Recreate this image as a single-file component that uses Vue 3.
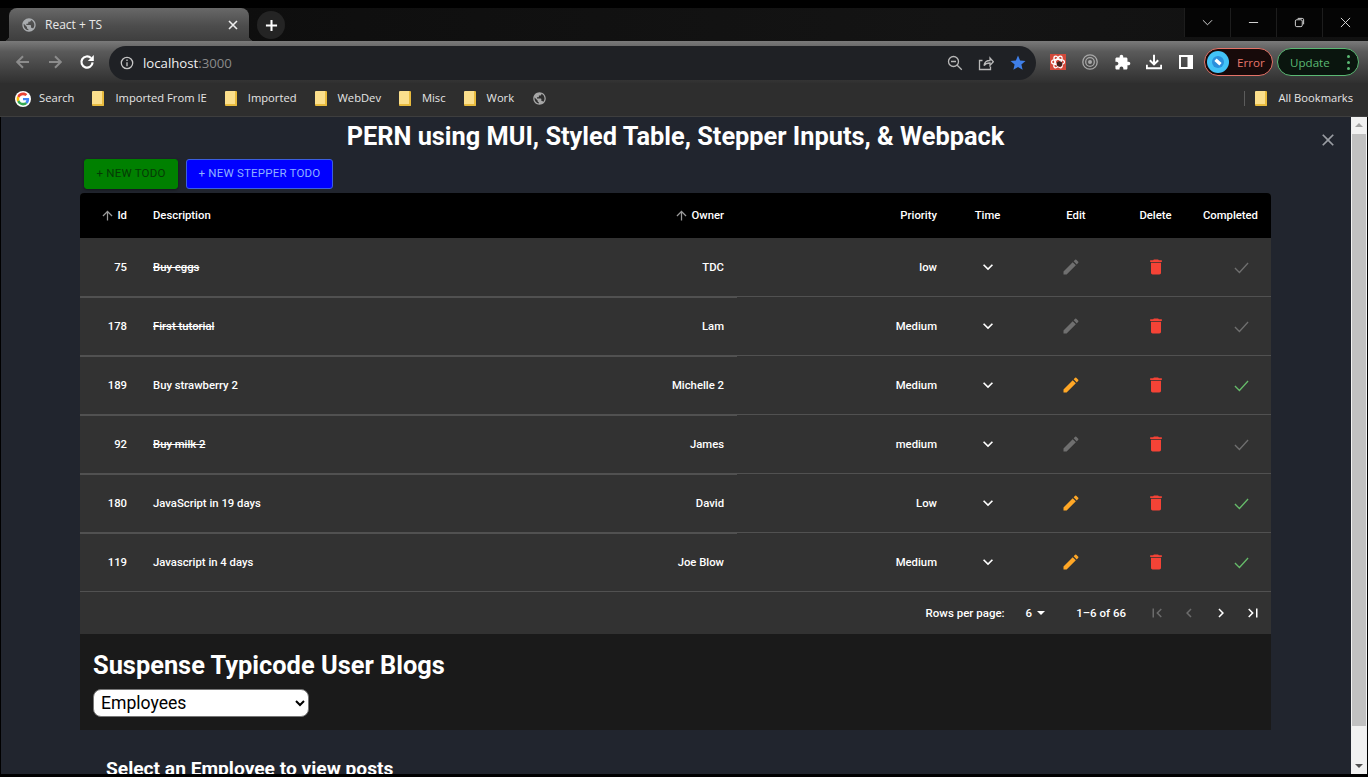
<script setup>
const icons = {
  up: 'M4 12l1.41 1.41L11 7.83V20h2V7.83l5.58 5.59L20 12l-8-8-8 8z',
  down: 'M7.41 8.59 12 13.17l4.59-4.58L18 10l-6 6-6-6 1.41-1.41z',
  edit: 'M3 17.25V21h3.75L17.81 9.94l-3.75-3.75L3 17.25zM20.71 7.04c.39-.39.39-1.02 0-1.41l-2.34-2.34a.9959.9959 0 0 0-1.41 0l-1.83 1.83 3.75 3.75 1.83-1.83z',
  trash: 'M6 19c0 1.1.9 2 2 2h8c1.1 0 2-.9 2-2V7H6v12zM19 4h-3.5l-1-1h-5l-1 1H5v2h14V4z',
  first: 'M18.41 16.59 13.82 12l4.59-4.59L17 6l-6 6 6 6zM6 6h2v12H6z',
  prev: 'M15.41 16.59 10.83 12l4.58-4.59L14 6l-6 6 6 6 1.41-1.41z',
  next: 'M8.59 16.59 13.17 12 8.59 7.41 10 6l6 6-6 6-1.41-1.41z',
  last: 'M5.59 7.41 10.18 12l-4.59 4.59L7 18l6-6-6-6zM16 6h2v12h-2z',
  close: 'M19 6.41 17.59 5 12 10.59 6.41 5 5 6.41 10.59 12 5 17.59 6.41 19 12 13.41 17.59 19 19 17.59 13.41 12z',
  puzzle: 'M20.5 11H19V7c0-1.1-.9-2-2-2h-4V3.5C13 2.12 11.88 1 10.5 1S8 2.12 8 3.5V5H4c-1.1 0-1.99.9-1.99 2v3.8H3.5c1.49 0 2.7 1.21 2.7 2.7s-1.21 2.7-2.7 2.7H2V20c0 1.1.9 2 2 2h3.8v-1.5c0-1.49 1.21-2.7 2.7-2.7 1.49 0 2.7 1.21 2.7 2.7V22H17c1.1 0 2-.9 2-2v-4h1.5c1.38 0 2.5-1.12 2.5-2.5S21.88 11 20.5 11z',
  star: 'M12 17.27 18.18 21l-1.64-7.03L22 9.24l-7.19-.61L12 2 9.19 8.63 2 9.24l5.46 4.73L5.82 21z',
  globe: 'M12 2C6.48 2 2 6.48 2 12s4.48 10 10 10 10-4.48 10-10S17.52 2 12 2zm-1 17.93c-3.95-.49-7-3.85-7-7.93 0-.62.08-1.21.21-1.79L9 15v1c0 1.1.9 2 2 2v1.93zm6.9-2.54c-.26-.81-1-1.39-1.9-1.39h-1v-3c0-.55-.45-1-1-1H8v-2h2c.55 0 1-.45 1-1V7h2c1.1 0 2-.9 2-2v-.41c2.93 1.19 5 4.06 5 7.41 0 2.08-.8 3.97-2.1 5.39z'
}

const bookmarks = ['Imported From IE', 'Imported', 'WebDev', 'Misc', 'Work']

const todos = [
  { id: 75, description: 'Buy eggs', owner: 'TDC', priority: 'low', done: true },
  { id: 178, description: 'First tutorial', owner: 'Lam', priority: 'Medium', done: true },
  { id: 189, description: 'Buy strawberry 2', owner: 'Michelle 2', priority: 'Medium', done: false },
  { id: 92, description: 'Buy milk 2', owner: 'James', priority: 'medium', done: true },
  { id: 180, description: 'JavaScript in 19 days', owner: 'David', priority: 'Low', done: false },
  { id: 119, description: 'Javascript in 4 days', owner: 'Joe Blow', priority: 'Medium', done: false }
]
</script>

<template>
  <div class="window">
    <!-- barre des onglets -->
    <div class="tabstrip">
      <div class="tab">
        <svg class="tab-globe" viewBox="0 0 24 24"><path :d="icons.globe" /></svg>
        <span class="tab-title">React + TS</span>
        <svg class="tab-close" viewBox="0 0 12 12"><path d="M2 2l8 8M10 2l-8 8" /></svg>
      </div>
      <div class="newtab">
        <svg viewBox="0 0 14 14"><path d="M7 1v12M1 7h12" /></svg>
      </div>
      <div class="wincontrols">
        <div class="winbtn">
          <svg viewBox="0 0 12 12"><path d="M1 3.5l5 5 5-5" /></svg>
        </div>
        <div class="winbtn">
          <svg viewBox="0 0 12 12"><path d="M1 6h10" /></svg>
        </div>
        <div class="winbtn">
          <svg viewBox="0 0 12 12"><rect x="1.5" y="3" width="7.5" height="7.5" rx="1.5" /><path d="M4 1.5h5a1.5 1.5 0 0 1 1.5 1.5v5" /></svg>
        </div>
        <div class="winbtn">
          <svg viewBox="0 0 12 12"><path d="M1 1l10 10M11 1L1 11" /></svg>
        </div>
      </div>
    </div>

    <!-- barre d'adresse -->
    <div class="toolbar">
      <svg class="nav dim" viewBox="0 0 16 16"><path d="M14 8H2.5M8 2.2 2.2 8 8 13.8" /></svg>
      <svg class="nav dim" viewBox="0 0 16 16"><path d="M2 8h11.5M8 2.2 13.8 8 8 13.8" /></svg>
      <svg class="nav reload" viewBox="0 0 16 16"><path d="M13.6 8.4a5.6 5.6 0 1 1-1.6-4.3" /><path class="solid" d="M14.800 1v6H8.800z" /></svg>
      <div class="omnibox">
        <svg class="info" viewBox="0 0 14 14"><circle cx="7" cy="7" r="5.7" /><path d="M7 6.2v4M7 3.6v1.3" /></svg>
        <span class="url">localhost<span class="port">:3000</span></span>
        <svg class="omni-icon" viewBox="0 0 16 16"><circle cx="6.5" cy="6.5" r="5" /><path d="M4 6.5h5M10.2 10.2l4.6 4.6" /></svg>
        <svg class="omni-icon" viewBox="0 0 16 16"><path d="M4.5 5.5H1.5v9h11v-3M6 10.5c.5-3.5 3-5 6-5V3l3.3 3.7L12 10.4V8c-2.5 0-4.5.5-6 2.5z" /></svg>
        <svg class="omni-star" viewBox="0 0 24 24"><path :d="icons.star" /></svg>
      </div>
      <div class="ext ext-red">
        <svg viewBox="0 0 16 16"><ellipse cx="8" cy="8" rx="6.5" ry="2.6" /><ellipse cx="8" cy="8" rx="6.5" ry="2.6" transform="rotate(60 8 8)" /><ellipse cx="8" cy="8" rx="6.5" ry="2.6" transform="rotate(120 8 8)" /><circle class="bug" cx="9.5" cy="10" r="2.8" /></svg>
      </div>
      <svg class="ext ext-target" viewBox="0 0 16 16"><circle cx="8" cy="8" r="7.2" /><circle cx="8" cy="8" r="4.3" /><circle class="dot" cx="8" cy="8" r="2" /></svg>
      <svg class="ext ext-puzzle" viewBox="0 0 24 24"><path :d="icons.puzzle" /></svg>
      <svg class="ext ext-dl" viewBox="0 0 16 16"><path d="M8 .8v9.4M3.8 6.2 8 10.4l4.2-4.2M.8 10.8v3.4h14.4v-3.4" /></svg>
      <svg class="ext ext-side" viewBox="0 0 14 14"><path d="M0 0h14v14H0zM2 2v10h6.5V2z" fill-rule="evenodd" /></svg>
      <div class="pill pill-error">
        <span class="avatar"><svg viewBox="0 0 16 16"><circle cx="8" cy="8" r="6" /><path d="M5.5 5.800l5 4.400" /></svg></span>
        <span>Error</span>
      </div>
      <div class="pill pill-update">
        <span>Update</span>
        <span class="dots"><i></i><i></i><i></i></span>
      </div>
    </div>

    <!-- favoris -->
    <div class="bookmarks">
      <div class="bm bm-google">
        <svg class="google" viewBox="-6 -6 60 60">
          <circle cx="24" cy="24" r="30" fill="#fff" />
          <path fill="#EA4335" d="M24 9.5c3.54 0 6.71 1.22 9.21 3.6l6.85-6.85C35.9 2.38 30.47 0 24 0 14.62 0 6.51 5.38 2.56 13.22l7.98 6.19C12.43 13.72 17.74 9.5 24 9.5z" />
          <path fill="#4285F4" d="M46.98 24.55c0-1.57-.15-3.09-.38-4.55H24v9.02h12.94c-.58 2.96-2.26 5.48-4.78 7.18l7.73 6c4.51-4.18 7.09-10.36 7.09-17.65z" />
          <path fill="#FBBC05" d="M10.53 28.59c-.48-1.45-.76-2.99-.76-4.59s.27-3.14.76-4.59l-7.98-6.19C.92 16.46 0 20.12 0 24c0 3.88.92 7.54 2.56 10.78l7.97-6.19z" />
          <path fill="#34A853" d="M24 48c6.48 0 11.93-2.13 15.89-5.81l-7.73-6c-2.15 1.45-4.92 2.3-8.16 2.3-6.26 0-11.57-4.22-13.47-9.91l-7.98 6.19C6.51 42.62 14.62 48 24 48z" />
        </svg>
        <span>Search</span>
      </div>
      <div v-for="name in bookmarks" :key="name" class="bm">
        <span class="folder"></span>
        <span>{{ name }}</span>
      </div>
      <svg class="bm-globe" viewBox="0 0 24 24"><path :d="icons.globe" /></svg>
      <div class="bm bm-all">
        <span class="folder"></span>
        <span>All Bookmarks</span>
      </div>
    </div>

    <!-- contenu de la page -->
    <div class="viewport">
      <main class="page">
        <svg class="page-close" viewBox="0 0 24 24"><path :d="icons.close" /></svg>
        <h1 class="title">PERN using MUI, Styled Table, Stepper Inputs, &amp; Webpack</h1>
        <div class="actions">
          <button class="btn btn-green">+ NEW TODO</button>
          <button class="btn btn-blue">+ NEW STEPPER TODO</button>
        </div>

        <div class="panel">
          <table class="todos">
            <colgroup>
              <col class="c-id" /><col class="c-desc" /><col class="c-owner" /><col class="c-prio" />
              <col class="c-time" /><col class="c-edit" /><col class="c-del" /><col class="c-comp" />
            </colgroup>
            <thead>
              <tr>
                <th class="right"><svg class="sort" viewBox="0 0 24 24"><path :d="icons.up" /></svg>Id</th>
                <th>Description</th>
                <th class="right"><svg class="sort" viewBox="0 0 24 24"><path :d="icons.up" /></svg>Owner</th>
                <th class="right">Priority</th>
                <th class="center">Time</th>
                <th class="center">Edit</th>
                <th class="center">Delete</th>
                <th class="right">Completed</th>
              </tr>
            </thead>
            <tbody>
              <tr v-for="todo in todos" :key="todo.id">
                <td class="right thick">{{ todo.id }}</td>
                <td class="thick" :class="{ struck: todo.done }">{{ todo.description }}</td>
                <td class="right thick">{{ todo.owner }}</td>
                <td class="right">{{ todo.priority }}</td>
                <td class="center">
                  <svg class="chevron" viewBox="0 0 24 24"><path :d="icons.down" /></svg>
                </td>
                <td class="center">
                  <svg class="edit" :class="{ off: todo.done }" viewBox="0 0 24 24"><path :d="icons.edit" /></svg>
                </td>
                <td class="center">
                  <svg class="trash" viewBox="0 0 24 24"><path :d="icons.trash" /></svg>
                </td>
                <td class="right">
                  <svg class="check" :class="{ off: todo.done }" viewBox="0 0 16 16"><path d="M1 8.5l4.8 4.8L15 3.2" /></svg>
                </td>
              </tr>
            </tbody>
          </table>
          <div class="pager">
            <span>Rows per page:</span>
            <span class="pager-size">6<i class="caret"></i></span>
            <span class="pager-count">1–6 of 66</span>
            <div class="pager-btns">
              <svg class="off" viewBox="0 0 24 24"><path :d="icons.first" /></svg>
              <svg class="off" viewBox="0 0 24 24"><path :d="icons.prev" /></svg>
              <svg viewBox="0 0 24 24"><path :d="icons.next" /></svg>
              <svg viewBox="0 0 24 24"><path :d="icons.last" /></svg>
            </div>
          </div>
        </div>

        <section class="blogs">
          <h2 class="blogs-title">Suspense Typicode User Blogs</h2>
          <select class="employees">
            <option>Employees</option>
          </select>
        </section>
        <h3 class="hint">Select an Employee to view posts</h3>
      </main>

      <div class="scrollbar">
        <i class="arrow arrow-up"></i>
        <div class="thumb"></div>
        <i class="arrow arrow-down"></i>
      </div>
    </div>
  </div>
</template>

<style>
html, body {
  margin: 0;
  background: #000;
  overflow: hidden;
}
</style>

<style scoped>
.window {
  width: 1368px;
  height: 777px;
  display: flex;
  flex-direction: column;
  background: #000;
  font-family: Roboto, "Liberation Sans", sans-serif;
  color: #fff;
  overflow: hidden;
}

/* Onglets */
.tabstrip {
  height: 33px;
  margin-top: 8px;
  flex: none;
  display: flex;
  align-items: flex-start;
  background: linear-gradient(90deg, #0c0c0c, #141414 70%, #111);
}
.tab {
  position: relative;
  width: 240px;
  height: 33px;
  margin-left: 9px;
  box-sizing: border-box;
  padding: 0 10px 0 12px;
  display: flex;
  align-items: center;
  border-radius: 8px 8px 0 0;
  background: linear-gradient(#686868, #4c4c4c 55%, #3e3e3e);
}
.tab::before,
.tab::after {
  content: "";
  position: absolute;
  bottom: 0;
  width: 6px;
  height: 6px;
}
.tab::before {
  left: -6px;
  background: radial-gradient(circle at 0 0, transparent 6px, #3e3e3e 6.5px);
}
.tab::after {
  right: -6px;
  background: radial-gradient(circle at 100% 0, transparent 6px, #3e3e3e 6.5px);
}
.tab-globe {
  width: 16px;
  height: 16px;
  fill: #a9acaf;
}
.tab-title {
  margin-left: 8px;
  flex: 1;
  font: 12px "Open Sans", sans-serif;
  color: #e8e8e8;
}
.tab-close {
  width: 12px;
  height: 12px;
  fill: none;
  stroke: #eee;
  stroke-width: 1.6;
}
.newtab {
  width: 28px;
  height: 28px;
  margin: 3px 0 0 8px;
  border-radius: 50%;
  background: #242424;
  display: flex;
  align-items: center;
  justify-content: center;
}
.newtab svg {
  width: 13px;
  height: 13px;
  fill: none;
  stroke: #fff;
  stroke-width: 2.2;
}
.wincontrols {
  margin-left: auto;
  display: flex;
  height: 29px;
  background: #050505;
}
.winbtn {
  width: 46px;
  display: flex;
  align-items: center;
  justify-content: center;
  border-left: 1px solid #1d1d1d;
  box-sizing: border-box;
}
.winbtn svg {
  width: 11px;
  height: 11px;
  fill: none;
  stroke: #e4e4e4;
  stroke-width: 1;
}

/* Barre d'adresse */
.toolbar {
  height: 42px;
  flex: none;
  display: flex;
  align-items: center;
  padding-left: 15px;
  box-sizing: border-box;
  background: linear-gradient(#7a7a7a, #5a5a5a 25%, #303030);
}
.nav {
  width: 16px;
  height: 16px;
  margin-right: 16px;
  flex: none;
  fill: none;
  stroke: #fff;
  stroke-width: 2;
}
.nav.dim {
  stroke: #8c8c8c;
}
.nav.reload {
  stroke-width: 2.2;
}
.nav .solid {
  fill: #fff;
  stroke: none;
}
.omnibox {
  width: 927px;
  height: 34px;
  flex: none;
  margin-left: -2px;
  margin-top: 1px;
  padding: 0 9px 0 11px;
  box-sizing: border-box;
  display: flex;
  align-items: center;
  background: #1f2125;
  border-radius: 17px;
}
.info {
  width: 14px;
  height: 14px;
  fill: none;
  stroke: #c6c6c6;
  stroke-width: 1.3;
}
.url {
  margin-left: 9px;
  flex: 1;
  font: 13.2px "Open Sans", sans-serif;
  color: #f0f0f0;
}
.port {
  color: #8a8a8a;
}
.omni-icon {
  width: 16px;
  height: 16px;
  margin-right: 15px;
  fill: none;
  stroke: #b8b8b8;
  stroke-width: 1.3;
}
.omni-star {
  width: 18px;
  height: 18px;
  fill: #3f7fe8;
}
.ext {
  margin-left: 16px;
  flex: none;
}
.ext-red {
  width: 16px;
  height: 16px;
  margin-left: 14px;
  background: #d2493a;
  display: flex;
}
.ext-red svg {
  fill: none;
  stroke: #fff;
  stroke-width: 1.2;
}
.ext-red .bug {
  fill: #40201c;
  stroke: none;
}
.ext-target {
  width: 16px;
  height: 16px;
  fill: none;
  stroke: #a8a8a8;
  stroke-width: 1.3;
}
.ext-target .dot {
  fill: #a8a8a8;
  stroke: none;
}
.ext-puzzle {
  width: 17px;
  height: 17px;
  fill: #fff;
}
.ext-dl {
  width: 16px;
  height: 16px;
  margin-left: 15px;
  fill: none;
  stroke: #fff;
  stroke-width: 2;
}
.ext-side {
  width: 14px;
  height: 14px;
  margin-left: 17px;
  fill: #fff;
}
.pill {
  height: 28px;
  flex: none;
  box-sizing: border-box;
  border-radius: 14px;
  display: flex;
  align-items: center;
  font: 11.6px "Open Sans", sans-serif;
}
.pill-error {
  width: 69px;
  margin-left: 11px;
  padding-left: 2px;
  border: 1px solid #e57368;
  background: #170a0a;
  color: #e8776c;
  gap: 8px;
}
.avatar {
  width: 22px;
  height: 22px;
  border-radius: 50%;
  background: #42c3f7;
  display: flex;
  align-items: center;
  justify-content: center;
}
.avatar svg {
  width: 16px;
  height: 16px;
  fill: #2b8fdc;
  stroke: #fff;
  stroke-width: 3.4;
}
.avatar circle {
  stroke: none;
}
.pill-update {
  width: 82px;
  margin-left: 4px;
  padding: 0 8px 0 12px;
  justify-content: space-between;
  border: 1px solid #5bb974;
  background: #0a150e;
  color: #5bb974;
}
.dots {
  display: flex;
  flex-direction: column;
  gap: 3px;
}
.dots i {
  width: 3px;
  height: 3px;
  border-radius: 50%;
  background: #5bb974;
}

/* Favoris */
.bookmarks {
  height: 34px;
  flex: none;
  display: flex;
  align-items: center;
  padding: 0 0 2px 15px;
  box-sizing: border-box;
  background: #2e2e2e;
  border-bottom: 1px solid #3e3e3e;
  font: 11.2px "Open Sans", sans-serif;
  color: #e6e6e6;
}
.bm {
  display: flex;
  align-items: center;
  margin-right: 18px;
  white-space: nowrap;
}
.bm span:last-child {
  margin-top: -2px;
}
.bm-google {
  gap: 8px;
}
.google {
  width: 16px;
  height: 16px;
}
.folder {
  width: 12px;
  height: 15px;
  margin-right: 11px;
  background: #fbdf8c;
  border-bottom: 2px solid #e8bb3e;
  border-right: 2px solid #e8bb3e;
  box-sizing: border-box;
  border-radius: 1px;
}
.bm-globe {
  width: 15px;
  height: 15px;
  fill: #a6a6a6;
}
.bm-all {
  margin-left: auto;
  margin-right: 15px;
  padding-left: 10px;
  border-left: 1px solid #5c5c5c;
}

/* Page */
.viewport {
  flex: 1;
  min-height: 0;
  margin: 0 1px 3px;
  display: flex;
}
.page {
  position: relative;
  flex: 1;
  min-width: 0;
  overflow: hidden;
  background: #21252e;
  padding: 0 80px 0 79px;
  box-sizing: border-box;
}
.page-close {
  position: absolute;
  top: 13px;
  right: 13px;
  width: 20px;
  height: 20px;
  fill: #9a9da3;
}
.title {
  margin: 0;
  font-size: 25.35px;
  line-height: 39px;
  height: 42px;
  font-weight: 700;
  text-align: center;
}
.actions {
  display: flex;
  gap: 8px;
  padding-left: 4px;
  height: 34px;
}
.btn {
  height: 30px;
  padding: 0 0 2px;
  border-radius: 3px;
  font-family: inherit;
  font-size: 11.5px;
  font-weight: 400;
  letter-spacing: 0.2px;
  white-space: nowrap;
}
.btn-green {
  width: 94px;
  background: #008000;
  border: 1px solid #008000;
  color: #063a06;
  box-shadow: 0 1px 3px rgba(0, 0, 0, 0.4);
}
.btn-blue {
  width: 147px;
  background: #0000ff;
  border: 1px solid #3b5fe0;
  color: #8fb0ff;
}
.panel {
  background: #323232;
  border-radius: 4px 4px 0 0;
  overflow: hidden;
}

/* Tableau */
.todos {
  width: 1191px;
  table-layout: fixed;
  border-collapse: separate;
  border-spacing: 0;
  font-size: 11.3px;
}
.c-id { width: 60px; }
.c-desc { width: 400px; }
.c-owner { width: 197px; }
.c-prio { width: 213px; }
.c-time { width: 75px; }
.c-edit { width: 102px; }
.c-del { width: 57px; }
.c-comp { width: 87px; }
.todos th {
  height: 45px;
  padding: 0 13px 1px;
  box-sizing: border-box;
  background: #000;
  font-weight: 500;
  text-align: left;
  white-space: nowrap;
}
.todos td {
  height: 59px;
  padding: 0 13px;
  box-sizing: border-box;
  border-bottom: 1px solid #515151;
  font-weight: 500;
  color: #fff;
}
.todos tbody tr:not(:last-child) .thick {
  box-shadow: 0 1px 0 #515151;
}
.todos .right {
  text-align: right;
}
.todos .center {
  text-align: center;
}
.todos th.center {
  padding: 0 0 1px;
}
.todos td.center {
  padding: 0;
}
.struck {
  text-decoration: line-through;
}
.todos svg {
  display: inline-block;
  vertical-align: middle;
}
.todos .sort {
  width: 15px;
  height: 15px;
  margin-right: 2px;
  fill: #9a9a9a;
  vertical-align: -4px;
}
.chevron {
  width: 20px;
  height: 20px;
  fill: #fff;
}
.edit {
  width: 20px;
  height: 20px;
  margin-right: 11px;
  fill: #ffa726;
}
.edit.off {
  fill: #6f6f6f;
}
.trash {
  width: 20px;
  height: 20px;
  fill: #f44336;
}
.check {
  width: 15px;
  height: 15px;
  margin-right: 9px;
  fill: none;
  stroke: #66bb6a;
  stroke-width: 1.4;
}
.check.off {
  stroke: #6f6f6f;
}

/* Pagination */
.pager {
  height: 42px;
  display: flex;
  align-items: center;
  justify-content: flex-end;
  padding-right: 9px;
  font-size: 11.5px;
  font-weight: 500;
  color: #fff;
}
.pager-size {
  margin-left: 21px;
  display: flex;
  align-items: center;
  gap: 5px;
}
.caret {
  width: 0;
  height: 0;
  border-left: 4px solid transparent;
  border-right: 4px solid transparent;
  border-top: 4px solid #fff;
}
.pager-count {
  margin-left: 31px;
}
.pager-btns {
  margin-left: 22px;
  display: flex;
  gap: 14px;
}
.pager-btns svg {
  width: 18px;
  height: 18px;
  fill: #fff;
}
.pager-btns svg.off {
  fill: #6b6b6b;
}

/* Section blogs */
.blogs {
  height: 96px;
  padding: 14px 13px 0;
  box-sizing: border-box;
  background: #1a1a1a;
}
.blogs-title {
  margin: 0;
  font-size: 25.4px;
  line-height: 34px;
  font-weight: 700;
}
.employees {
  display: block;
  width: 216px;
  height: 28px;
  margin-top: 7px;
  padding-left: 3px;
  border: 1px solid #767676;
  border-radius: 8px;
  background: #fff;
  color: #000;
  font-family: inherit;
  font-size: 17.6px;
}
.hint {
  margin: 27px 0 0 26px;
  font-size: 19.2px;
  line-height: 24px;
  font-weight: 700;
}

/* Barre de défilement */
.scrollbar {
  position: relative;
  width: 16px;
  flex: none;
  background: #f1f1f1;
}
.thumb {
  position: absolute;
  top: 17px;
  bottom: 48px;
  left: 1px;
  right: 1px;
  background: #c1c1c1;
}
.arrow {
  position: absolute;
  left: 4px;
  width: 0;
  height: 0;
  border-left: 4px solid transparent;
  border-right: 4px solid transparent;
}
.arrow-up {
  top: 6px;
  border-bottom: 4px solid #a3a3a3;
}
.arrow-down {
  bottom: 6px;
  border-top: 4px solid #505050;
}
</style>
